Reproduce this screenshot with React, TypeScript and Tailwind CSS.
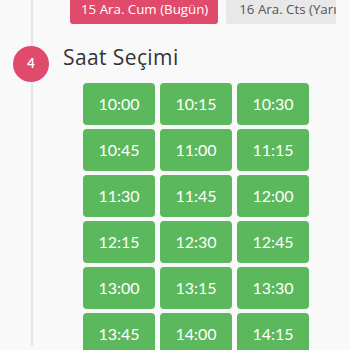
const times = [
  "10:00", "10:15", "10:30",
  "10:45", "11:00", "11:15",
  "11:30", "11:45", "12:00",
  "12:15", "12:30", "12:45",
  "13:00", "13:15", "13:30",
  "13:45", "14:00", "14:15",
  "14:30", "14:45", "15:00",
];

export default function App() {
  return (
    <div className="h-[350px] w-[350px] overflow-hidden bg-[#f9f9f9] font-['Lato',sans-serif]">
      <div className="ml-[31px] h-full border-l-2 border-[#e6e6e6]">
        {/* day tabs */}
        <div className="-mt-[4px] ml-[37px] flex w-[266px] gap-[8px] overflow-hidden font-['Open_Sans',sans-serif]">
          <button className="h-[28px] shrink-0 rounded-[3px] bg-[#e14b6b] pl-[11px] pr-[10px] text-[13.3px] text-white">
            15 Ara. Cum (Bugün)
          </button>
          <button className="h-[28px] shrink-0 rounded-[3px] bg-[#e8e8e8] pl-[13px] pr-[10px] text-[13.3px] text-[#555]">
            16 Ara. Cts (Yarın)
          </button>
        </div>

        {/* step heading */}
        <div className="mt-[21px] flex items-start">
          <div className="-ml-[20px] mt-[1px] flex h-[36px] w-[36px] items-center justify-center rounded-full bg-[#e14b6b] text-[13px] font-bold text-white">
            4
          </div>
          <h2 className="ml-[14px] font-['Open_Sans',sans-serif] text-[21px] leading-[24px] tracking-[0.4px] text-[#333]">
            Saat Seçimi
          </h2>
        </div>

        {/* time slots */}
        <div className="ml-[50px] mt-[1px] grid w-[226px] grid-cols-3 gap-x-[5px] gap-y-[4px]">
          {times.map((t) => (
            <button
              key={t}
              className="flex h-[42px] items-center justify-center rounded-[4px] bg-[#5cb85c] text-[16px] text-white"
            >
              {t}
            </button>
          ))}
        </div>
      </div>
    </div>
  );
}
